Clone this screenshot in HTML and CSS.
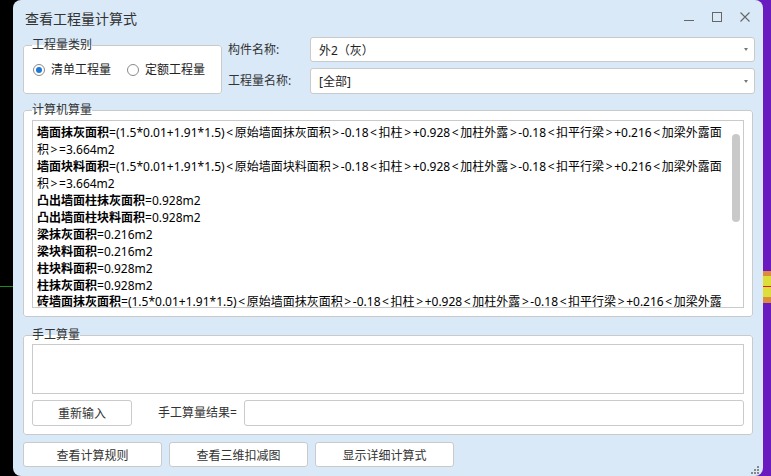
FILE: index.html
```html
<!DOCTYPE html>
<html lang="zh-CN">
<head>
<meta charset="utf-8">
<title>查看工程量计算式</title>
<link rel="stylesheet" href="styles.css">
</head>
<body>
<div class="left-strip"><div class="green-line"></div></div>
<div class="window">
  <div class="titlebar">
    <span class="title">查看工程量计算式</span>
    <div class="controls">
      <svg class="ctl" width="10" height="10" viewBox="0 0 10 10"><line x1="0" y1="8.5" x2="10" y2="8.5" stroke="#666" stroke-width="1"/></svg>
      <svg class="ctl" width="10" height="10" viewBox="0 0 10 10"><rect x="0.5" y="0.5" width="9" height="9" fill="none" stroke="#666" stroke-width="1"/></svg>
      <svg class="ctl" width="10" height="10" viewBox="0 0 10 10"><path d="M0.5 0.5L9.5 9.5M9.5 0.5L0.5 9.5" stroke="#666" stroke-width="1.1"/></svg>
    </div>
  </div>
  <div class="content">
    <div class="top-row">
      <fieldset class="group type-group">
        <legend>工程量类别</legend>
        <div class="radios">
          <span class="radio checked"><span class="dot"></span></span><span class="radio-label">清单工程量</span>
          <span class="radio second"></span><span class="radio-label">定额工程量</span>
        </div>
      </fieldset>
      <div class="fields">
        <div class="field">
          <span class="field-label">构件名称:</span>
          <div class="combo"><span>外2（灰）</span><span class="arrow"></span></div>
        </div>
        <div class="field">
          <span class="field-label">工程量名称:</span>
          <div class="combo tall"><span>[全部]</span><span class="arrow"></span></div>
        </div>
      </div>
    </div>

    <fieldset class="group calc-group">
      <legend>计算机算量</legend>
      <div class="textbox">
        <div class="lines">
          <div class="line"><b>墙面抹灰面积</b>=(1.5*0.01+1.91*1.5)<span class="ang">&lt;</span>原始墙面抹灰面积<span class="ang">&gt;</span>-0.18<span class="ang">&lt;</span>扣柱<span class="ang">&gt;</span>+0.928<span class="ang">&lt;</span>加柱外露<span class="ang">&gt;</span>-0.18<span class="ang">&lt;</span>扣平行梁<span class="ang">&gt;</span>+0.216<span class="ang">&lt;</span>加梁外露面</div>
          <div class="line">积<span class="ang">&gt;</span>=3.664m2</div>
          <div class="line"><b>墙面块料面积</b>=(1.5*0.01+1.91*1.5)<span class="ang">&lt;</span>原始墙面块料面积<span class="ang">&gt;</span>-0.18<span class="ang">&lt;</span>扣柱<span class="ang">&gt;</span>+0.928<span class="ang">&lt;</span>加柱外露<span class="ang">&gt;</span>-0.18<span class="ang">&lt;</span>扣平行梁<span class="ang">&gt;</span>+0.216<span class="ang">&lt;</span>加梁外露面</div>
          <div class="line">积<span class="ang">&gt;</span>=3.664m2</div>
          <div class="line"><b>凸出墙面柱抹灰面积</b>=0.928m2</div>
          <div class="line"><b>凸出墙面柱块料面积</b>=0.928m2</div>
          <div class="line"><b>梁抹灰面积</b>=0.216m2</div>
          <div class="line"><b>梁块料面积</b>=0.216m2</div>
          <div class="line"><b>柱块料面积</b>=0.928m2</div>
          <div class="line"><b>柱抹灰面积</b>=0.928m2</div>
          <div class="line last"><b>砖墙面抹灰面积</b>=(1.5*0.01+1.91*1.5)<span class="ang">&lt;</span>原始墙面抹灰面积<span class="ang">&gt;</span>-0.18<span class="ang">&lt;</span>扣柱<span class="ang">&gt;</span>+0.928<span class="ang">&lt;</span>加柱外露<span class="ang">&gt;</span>-0.18<span class="ang">&lt;</span>扣平行梁<span class="ang">&gt;</span>+0.216<span class="ang">&lt;</span>加梁外露</div>
        </div>
        <div class="scroll-track"><div class="thumb"></div></div>
      </div>
    </fieldset>

    <fieldset class="group manual-group">
      <legend>手工算量</legend>
      <div class="manual-input"></div>
      <div class="manual-row">
        <button class="btn small-btn">重新输入</button>
        <span class="result-label">手工算量结果=</span>
        <div class="result-input"></div>
      </div>
    </fieldset>

    <div class="bottom-buttons">
      <button class="btn wide-btn">查看计算规则</button>
      <button class="btn wide-btn">查看三维扣减图</button>
      <button class="btn wide-btn">显示详细计算式</button>
    </div>
  </div>
  <svg class="grip" width="8" height="8" viewBox="0 0 8 8">
    <rect x="6" y="0" width="2" height="2" fill="#888"/>
    <rect x="3" y="3" width="2" height="2" fill="#888"/>
    <rect x="6" y="3" width="2" height="2" fill="#888"/>
    <rect x="0" y="6" width="2" height="2" fill="#888"/>
    <rect x="3" y="6" width="2" height="2" fill="#888"/>
    <rect x="6" y="6" width="2" height="2" fill="#888"/>
  </svg>
</div>
<div class="right-strip">
  <div class="rs-purple top"></div>
  <div class="rs-orange a"></div>
  <div class="rs-yellow"></div>
  <div class="rs-red"></div>
  <div class="rs-yellow"></div>
  <div class="rs-orange b"></div>
  <div class="rs-purple rest"></div>
</div>
</body>
</html>
```

FILE: styles.css
```css
html, body {
  margin: 0;
  padding: 0;
}
body {
  height: 476px;
  display: flex;
  overflow: hidden;
  background: linear-gradient(to right, #000 50%, #6a1bc0 50%);
  font-family: "Noto Sans", "Noto Sans CJK SC", sans-serif;
  color: #333;
}

.left-strip {
  width: 13px;
  flex: none;
  background: #000;
  display: flex;
  flex-direction: column;
}
.green-line {
  margin-top: 286px;
  height: 1px;
  background: #1d8a1d;
}

.right-strip {
  width: 8px;
  flex: none;
  display: flex;
  flex-direction: column;
}
.rs-purple { background: #6a1bc0; }
.rs-purple.top { height: 271px; }
.rs-purple.rest { flex: 1; }
.rs-orange { background: #dc8c3c; }
.rs-orange.a { height: 5px; }
.rs-orange.b { height: 6px; }
.rs-yellow { background: #dede3a; height: 10px; }
.rs-red { background: #e01e1e; height: 1px; }

.window {
  width: 750px;
  flex: none;
  background: #d9e9f8;
  border-radius: 8px;
  position: relative;
  display: flex;
  flex-direction: column;
}

.titlebar {
  height: 37px;
  display: flex;
  align-items: center;
  padding-left: 12px;
}
.title {
  font-size: 14px;
  line-height: 20px;
  color: #333;
  margin-top: 1px;
}
.controls {
  margin-left: auto;
  align-self: flex-start;
  margin-top: 12px;
  padding-right: 13px;
  display: flex;
  gap: 18px;
}
.ctl { display: block; }

.content {
  padding: 0 10px;
  display: flex;
  flex-direction: column;
}

.group {
  margin: 0;
  border: 1px solid #cacaca;
  border-radius: 3px;
  background: #fff;
  min-width: 0;
  box-sizing: border-box;
}
.group legend {
  padding: 0;
  font-size: 12px;
  line-height: 16px;
  color: #333;
}

.top-row {
  display: flex;
  gap: 6px;
  margin-right: -2px;
}
.type-group {
  width: 199px;
  flex: none;
  padding: 9px 8px 14px;
}
.radios {
  display: flex;
  align-items: center;
  height: 16px;
  font-size: 12px;
  line-height: 16px;
}
.radio {
  width: 12px;
  height: 12px;
  box-sizing: border-box;
  border: 1px solid #8a8a8a;
  border-radius: 50%;
  background: #fff;
  display: flex;
  align-items: center;
  justify-content: center;
  margin-left: 1px;
  margin-right: 6px;
}
.radio.second {
  margin-left: 16px;
}
.dot {
  width: 6px;
  height: 6px;
  border-radius: 50%;
  background: #1f78d8;
}
.radio-label {
  color: #222;
}

.fields {
  flex: 1;
  display: flex;
  flex-direction: column;
  gap: 6px;
}
.field {
  display: flex;
  align-items: center;
}
.field-label {
  width: 82px;
  flex: none;
  font-size: 12px;
  line-height: 16px;
  color: #333;
}
.combo {
  flex: 1;
  height: 25px;
  box-sizing: border-box;
  border: 1px solid #cacaca;
  border-radius: 3px;
  background: #fff;
  display: flex;
  align-items: center;
  padding: 0 6px 0 8px;
  font-size: 12px;
  color: #222;
}
.combo.tall { height: 26px; }
.arrow {
  margin-left: auto;
  width: 0;
  height: 0;
  border-left: 2.5px solid transparent;
  border-right: 2.5px solid transparent;
  border-top: 3px solid #777;
}

.calc-group {
  margin-top: 8px;
  padding: 2px 8px 8px;
}
.textbox {
  height: 188px;
  box-sizing: border-box;
  border: 1px solid #cacaca;
  background: #fff;
  display: flex;
}
.lines {
  flex: 1;
  min-width: 0;
  padding: 3px 0 0 4px;
  font-size: 12px;
  line-height: 17px;
  color: #000;
}
.line {
  white-space: nowrap;
}
.line.last {
  line-height: 10px;
  height: 10px;
  margin-top: 3px;
}
.line b {
  font-weight: 700;
}
.ang {
  padding: 0 1.6px;
}
.scroll-track {
  width: 8px;
  flex: none;
  margin-right: 3px;
}
.thumb {
  margin-top: 13px;
  height: 88px;
  border-radius: 4px;
  background: #c9c9c9;
}

.manual-group {
  margin-top: 10px;
  padding: 1px 8px 8px;
}
.manual-input {
  height: 50px;
  box-sizing: border-box;
  border: 1px solid #cacaca;
  background: #fff;
}
.manual-row {
  margin-top: 6px;
  display: flex;
  align-items: center;
  height: 26px;
}
.btn {
  font: inherit;
  font-size: 12px;
  color: #333;
  background: #fff;
  border: 1px solid #cacaca;
  border-radius: 3px;
  box-sizing: border-box;
  padding: 0;
  margin: 0;
}
.small-btn {
  width: 100px;
  height: 26px;
}
.result-label {
  margin-left: 26px;
  font-size: 12px;
  line-height: 16px;
  color: #333;
}
.result-input {
  margin-left: 7px;
  flex: 1;
  height: 26px;
  box-sizing: border-box;
  border: 1px solid #cacaca;
  border-radius: 3px;
  background: #fff;
}

.bottom-buttons {
  margin-top: 7px;
  display: flex;
  gap: 7px;
}
.wide-btn {
  width: 139px;
  height: 25px;
}

.grip {
  position: absolute;
  right: 4px;
  bottom: 2px;
  display: block;
}
```
